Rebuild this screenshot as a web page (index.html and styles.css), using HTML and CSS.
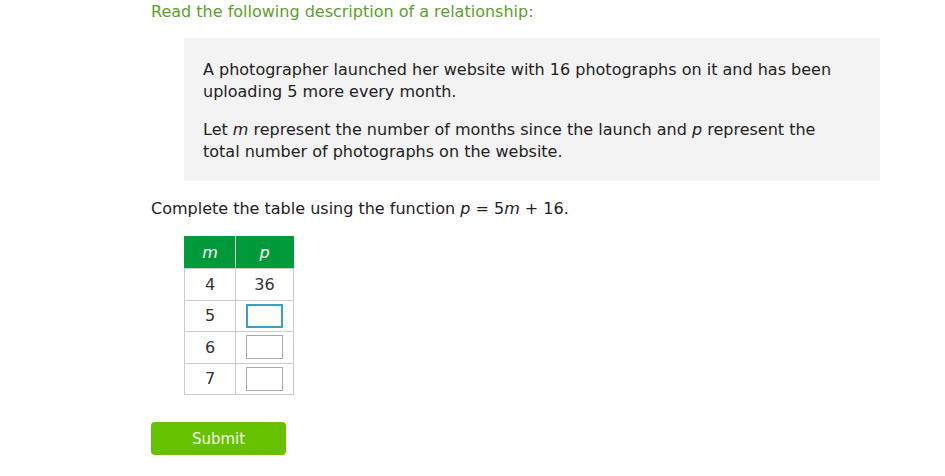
FILE: index.html
```html
<!DOCTYPE html>
<html>
<head>
<meta charset="utf-8">
<link rel="stylesheet" href="styles.css">
</head>
<body>
<main class="page">
  <h1 class="prompt">Read the following description of a relationship:</h1>
  <section class="story">
    <p>A photographer launched her website with 16 photographs on it and has been uploading 5 more every month.</p>
    <p>Let <i>m</i> represent the number of months since the launch and <i>p</i> represent the total number of photographs on the website.</p>
  </section>
  <p class="task">Complete the table using the function <i>p</i> = 5<i>m</i> + 16.</p>
  <table class="grid">
    <thead>
      <tr><th><i>m</i></th><th><i>p</i></th></tr>
    </thead>
    <tbody>
      <tr><td>4</td><td>36</td></tr>
      <tr><td>5</td><td><input class="cell active" type="text"></td></tr>
      <tr><td>6</td><td><input class="cell" type="text"></td></tr>
      <tr><td>7</td><td><input class="cell" type="text"></td></tr>
    </tbody>
  </table>
  <button class="submit" type="button">Submit</button>
</main>
</body>
</html>
```
FILE: styles.css
```css
html, body {
  margin: 0;
  padding: 0;
  background: #fff;
}
.page {
  padding: 2px 0 0 151px;
  font-family: "DejaVu Sans", Verdana, sans-serif;
  color: #333;
  display: flex;
  flex-direction: column;
  align-items: flex-start;
}
.prompt {
  margin: 0;
  font-size: 16px;
  font-weight: normal;
  color: #5e9e2e;
  line-height: 20px;
}
.story {
  margin: 16px 0 0 33px;
  width: 696px;
  box-sizing: border-box;
  background: #f3f3f3;
  padding: 21px 40px 18px 19px;
  font-size: 16px;
  line-height: 22px;
  color: #222;
}
.story p {
  margin: 0 0 16px 0;
}
.story p:last-child {
  margin-bottom: 0;
}
.task {
  margin: 18px 0 0 0;
  font-size: 16px;
  line-height: 20px;
  color: #222;
}
.grid {
  margin: 17px 0 0 33px;
  border-collapse: collapse;
  font-size: 16px;
  color: #333;
}
.grid th {
  background: #009a3a;
  color: #fff;
  font-weight: normal;
  height: 31px;
  padding: 0;
  border: 1px solid #ccc;
  border-top-color: #009a3a;
}
.grid th:first-child { width: 50px; border-left-color: #009a3a; }
.grid th:last-child { width: 57px; border-right-color: #009a3a; }
.grid td {
  height: 30.5px;
  padding: 0;
  text-align: center;
  border: 1px solid #ccc;
}
.cell {
  display: block;
  margin: 0 auto;
  width: 37px;
  height: 24px;
  box-sizing: border-box;
  border: 1px solid #aaa;
  padding: 0;
  background: #fff;
}
.cell.active {
  border: 2px solid #3aa0c8;
}
.submit {
  margin-top: 27px;
  width: 135px;
  height: 33px;
  border: none;
  border-radius: 4px;
  background: #66c200;
  color: #f2fae6;
  font-family: "DejaVu Sans", Verdana, sans-serif;
  font-size: 15px;
  padding: 0;
}
```
